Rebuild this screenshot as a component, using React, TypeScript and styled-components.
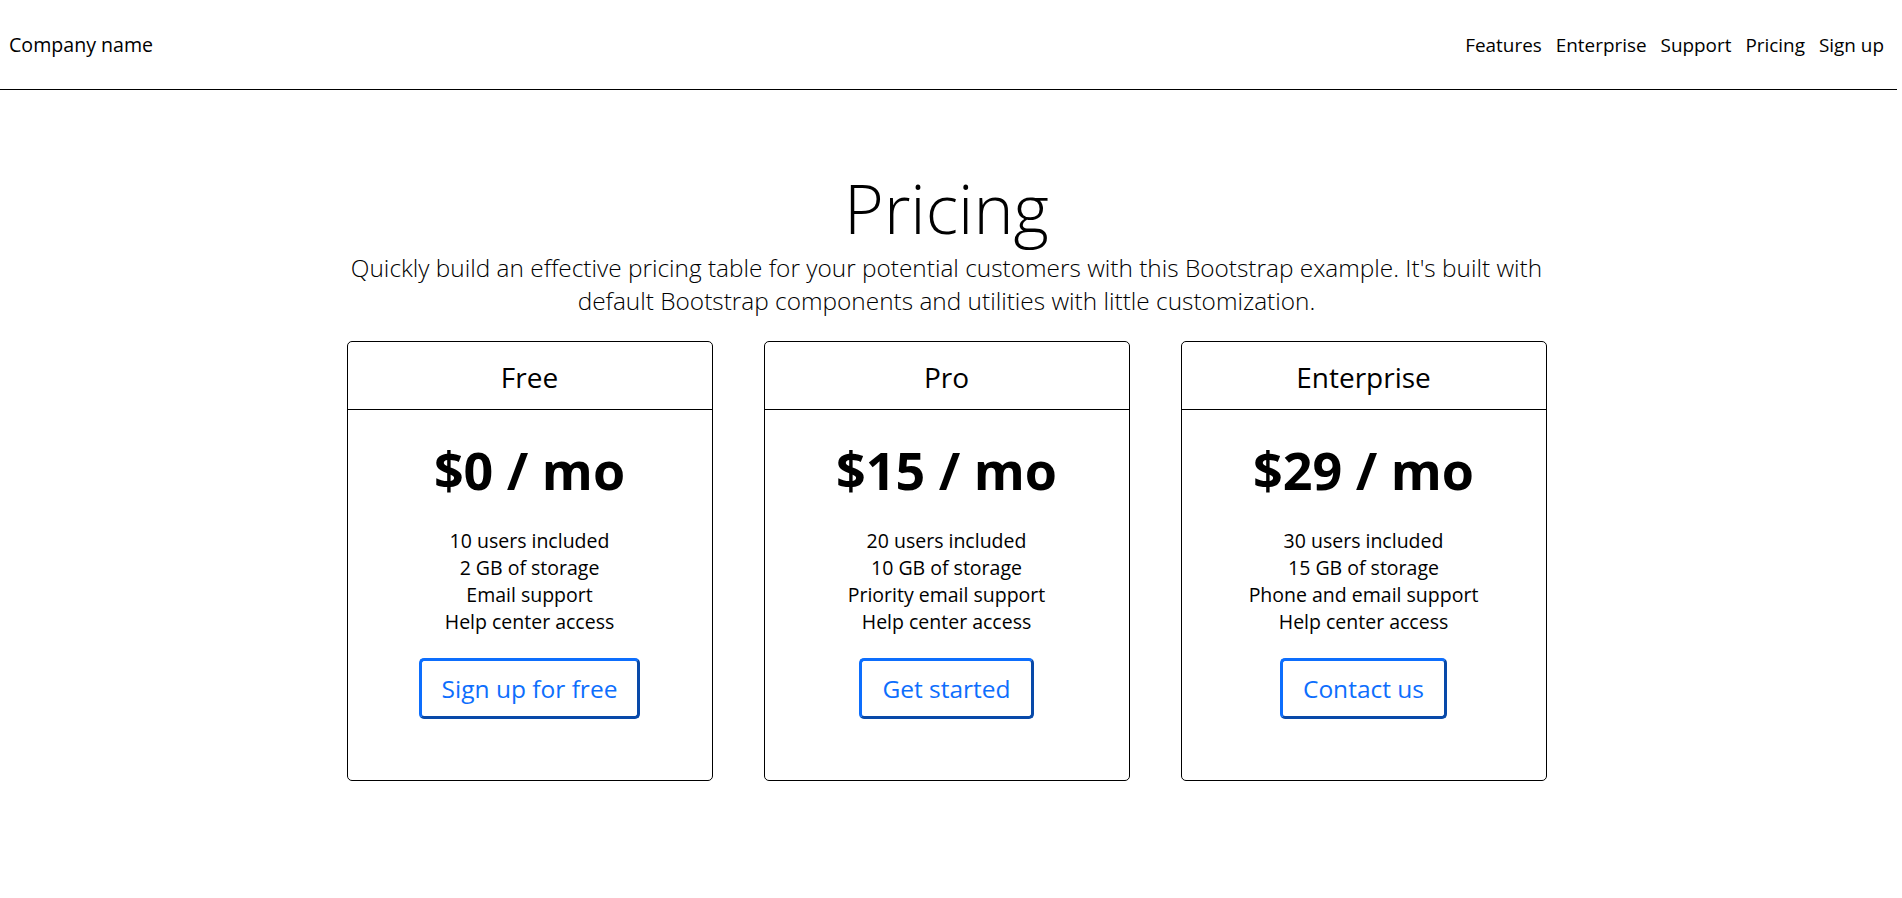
import React from "react";
import styled, { createGlobalStyle } from "styled-components";

const GlobalStyle = createGlobalStyle`
  html, body {
    margin: 0;
    padding: 0;
    background: #ffffff;
  }
  body {
    font-family: "Open Sans", "Noto Sans", "Liberation Sans", sans-serif;
    color: #000;
  }
  * { box-sizing: border-box; }
`;

const Page = styled.div`
  width: calc(100% - 5px);
`;

const Header = styled.header`
  height: 90px;
  display: flex;
  align-items: center;
  justify-content: space-between;
  padding: 0 13px 0 9px;
  border-bottom: 1px solid #000;
`;

const Brand = styled.div`
  font-size: 19.6px;
  font-weight: 400;
`;

const Nav = styled.nav`
  display: flex;
  gap: 14px;
`;

const NavLink = styled.a`
  font-size: 18.9px;
  color: #000;
  text-decoration: none;
`;

const Main = styled.main`
  max-width: 1204px;
  margin: 0 auto;
  padding: 79px 4px 0 0;
`;

const Hero = styled.section`
  text-align: center;
`;

const Title = styled.h1`
  margin: 0;
  font-size: 68px;
  font-weight: 300;
  line-height: 1.15;
`;

const Lead = styled.p`
  margin: 4px 0 0;
  font-size: 24.4px;
  font-weight: 300;
  line-height: 33px;
`;

const Cards = styled.div`
  display: grid;
  grid-template-columns: repeat(3, 1fr);
  gap: 51px;
  margin-top: 24px;
`;

const Card = styled.div`
  border: 1px solid #000;
  border-radius: 5px;
  text-align: center;
  height: 440px;
`;

const CardHeader = styled.div`
  height: 68px;
  padding-top: 3px;
  border-bottom: 1px solid #000;
  display: flex;
  align-items: center;
  justify-content: center;
  font-size: 28px;
  font-weight: 400;
`;

const CardBody = styled.div`
  padding: 29px 16px 16px;
`;

const Price = styled.div`
  font-size: 52px;
  font-weight: 700;
  line-height: 1.2;
`;

const Features = styled.ul`
  list-style: none;
  margin: 25px 0 23px;
  padding: 0;
  font-size: 19.5px;
  line-height: 27px;
`;

const Button = styled.button`
  font-family: inherit;
  font-size: 24.5px;
  color: #0d6efd;
  background: #fff;
  border: 3px outset #0d6efd;
  border-radius: 5px;
  height: 61px;
  padding: 0 20px;
  cursor: pointer;
`;

const plans = [
  {
    name: "Free",
    price: "$0 / mo",
    features: ["10 users included", "2 GB of storage", "Email support", "Help center access"],
    cta: "Sign up for free",
  },
  {
    name: "Pro",
    price: "$15 / mo",
    features: ["20 users included", "10 GB of storage", "Priority email support", "Help center access"],
    cta: "Get started",
  },
  {
    name: "Enterprise",
    price: "$29 / mo",
    features: ["30 users included", "15 GB of storage", "Phone and email support", "Help center access"],
    cta: "Contact us",
  },
];

export default function App() {
  return (
    <Page>
      <GlobalStyle />
      <Header>
        <Brand>Company name</Brand>
        <Nav>
          <NavLink href="#">Features</NavLink>
          <NavLink href="#">Enterprise</NavLink>
          <NavLink href="#">Support</NavLink>
          <NavLink href="#">Pricing</NavLink>
          <NavLink href="#">Sign up</NavLink>
        </Nav>
      </Header>
      <Main>
        <Hero>
          <Title>Pricing</Title>
          <Lead>
            Quickly build an effective pricing table for your potential customers with this Bootstrap example. It's built with
            <br />
            default Bootstrap components and utilities with little customization.
          </Lead>
        </Hero>
        <Cards>
          {plans.map((p) => (
            <Card key={p.name}>
              <CardHeader>{p.name}</CardHeader>
              <CardBody>
                <Price>{p.price}</Price>
                <Features>
                  {p.features.map((f) => (
                    <li key={f}>{f}</li>
                  ))}
                </Features>
                <Button type="button">{p.cta}</Button>
              </CardBody>
            </Card>
          ))}
        </Cards>
      </Main>
    </Page>
  );
}
